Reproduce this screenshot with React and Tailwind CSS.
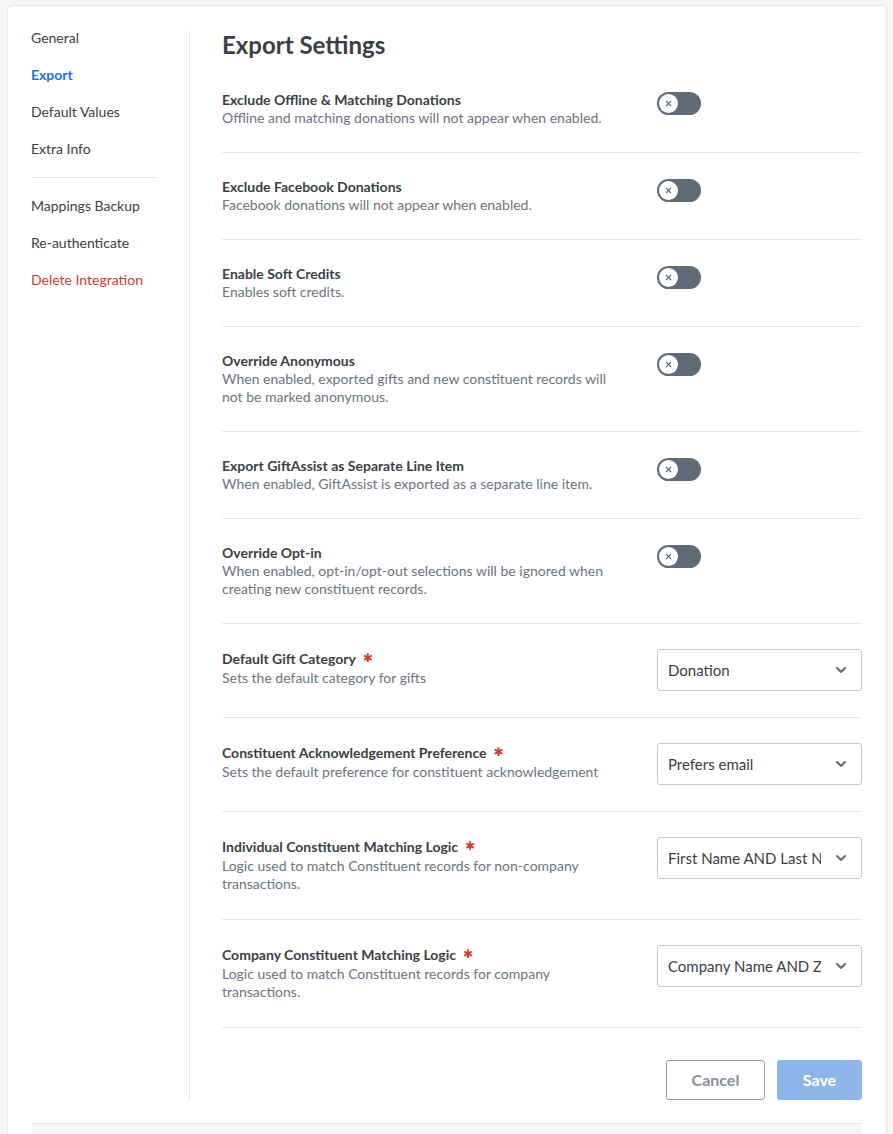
import { ChevronDown, X } from 'lucide-react';

const toggles = [
  { title: 'Exclude Offline & Matching Donations', desc: 'Offline and matching donations will not appear when enabled.' },
  { title: 'Exclude Facebook Donations', desc: 'Facebook donations will not appear when enabled.' },
  { title: 'Enable Soft Credits', desc: 'Enables soft credits.' },
  { title: 'Override Anonymous', desc: 'When enabled, exported gifts and new constituent records will not be marked anonymous.' },
  { title: 'Export GiftAssist as Separate Line Item', desc: 'When enabled, GiftAssist is exported as a separate line item.' },
  { title: 'Override Opt-in', desc: 'When enabled, opt-in/opt-out selections will be ignored when creating new constituent records.' },
];

const selects = [
  { title: 'Default Gift Category', desc: 'Sets the default category for gifts', value: 'Donation' },
  { title: 'Constituent Acknowledgement Preference', desc: 'Sets the default preference for constituent acknowledgement', value: 'Prefers email' },
  { title: 'Individual Constituent Matching Logic', desc: 'Logic used to match Constituent records for non-company transactions.', value: 'First Name AND Last Name' },
  { title: 'Company Constituent Matching Logic', desc: 'Logic used to match Constituent records for company transactions.', value: 'Company Name AND Zip' },
];

const Toggle = () => (
  <div className="w-[44px] h-[23px] rounded-full bg-[#5f6b77] p-[2px] flex items-center">
    <div className="w-[19px] h-[19px] rounded-full bg-white flex items-center justify-center">
      <X className="w-[9px] h-[9px] text-[#5f6b77]" strokeWidth={3} />
    </div>
  </div>
);

const Select = ({ value }) => (
  <div className="w-[205px] h-[42px] shrink-0 border border-[#c4c8cd] rounded-[3px] flex items-center pl-[10px] pr-[12px] gap-[12px]">
    <span className="flex-1 min-w-0 text-[15px] text-[#3b4046] whitespace-nowrap overflow-hidden">{value}</span>
    <ChevronDown className="w-[16px] h-[16px] shrink-0 text-[#5f6b77]" strokeWidth={3} />
  </div>
);

const navTop = ['General', 'Export', 'Default Values', 'Extra Info'];

export default function App() {
  return (
    <div className="min-h-[1134px] bg-[#f5f6f8] pt-[5px] pl-[7px] overflow-hidden" style={{ fontFamily: 'Lato, "Liberation Sans", sans-serif' }}>
      <div className="w-[880px] min-h-[1140px] bg-white border border-[#e6e8eb] rounded-[5px] flex flex-col">
        <div className="flex pt-[13px]">
          <aside className="w-[181px] shrink-0 pl-[23px] pr-[31px] text-[14px] text-[#3b4046]">
            {navTop.map((n) => (
              <div key={n} className={`h-[37px] flex items-center ${n === 'Export' ? 'text-[#1e73e0] font-bold' : ''}`}>{n}</div>
            ))}
            <div className="border-t border-[#e4e6e9] my-[10px]" />
            <div className="h-[37px] flex items-center -mt-[1px]">Mappings Backup</div>
            <div className="h-[37px] flex items-center">Re-authenticate</div>
            <div className="h-[37px] flex items-center text-[#d83a2f]">Delete Integration</div>
          </aside>
          <div className="w-px bg-[#e4e6e9] h-[1070px] mt-[11px]" />
          <main className="flex-1 pl-[32px] pr-[24px] pt-[11px]">
            <h1 className="text-[24px] font-bold text-[#3b4046] leading-[30px] mb-[6px]">Export Settings</h1>
            {toggles.map((t) => (
              <div key={t.title} className="flex justify-between py-[25px] border-b border-[#e4e6e9]">
                <div className="w-[400px] text-[14px] leading-[18px]">
                  <div className="font-bold text-[#3b4046]">{t.title}</div>
                  <div className="text-[#6b7480]">{t.desc}</div>
                </div>
                <div className="w-[205px] pt-[1px]">
                  <Toggle />
                </div>
              </div>
            ))}
            {selects.map((s) => (
              <div key={s.title} className="flex justify-between pt-[25px] pb-[26px] border-b border-[#e4e6e9]">
                <div className="w-[400px] text-[14px] leading-[18px]">
                  <div className="font-bold text-[#3b4046] leading-[19px] mb-[1px] flex items-center">
                    {s.title}
                    <span className="text-[#d83a2f] text-[12px] ml-[7px]" style={{ fontFamily: '"DejaVu Sans", sans-serif' }}>✱</span>
                  </div>
                  <div className="text-[#6b7480]">{s.desc}</div>
                </div>
                <Select value={s.value} />
              </div>
            ))}
            <div className="flex justify-end gap-[12px] pt-[32px]">
              <button className="w-[99px] h-[40px] border border-[#9a9ea3] rounded-[3px] text-[16px] font-bold text-[#8a8f95]">Cancel</button>
              <button className="w-[85px] h-[40px] rounded-[3px] bg-[#8fb6ea] text-[16px] font-bold text-white">Save</button>
            </div>
          </main>
        </div>
        <div className="mt-[23px] mx-[24px] h-[20px] bg-[#f5f6f8] border-t border-[#e4e6e9]" />
      </div>
    </div>
  );
}
